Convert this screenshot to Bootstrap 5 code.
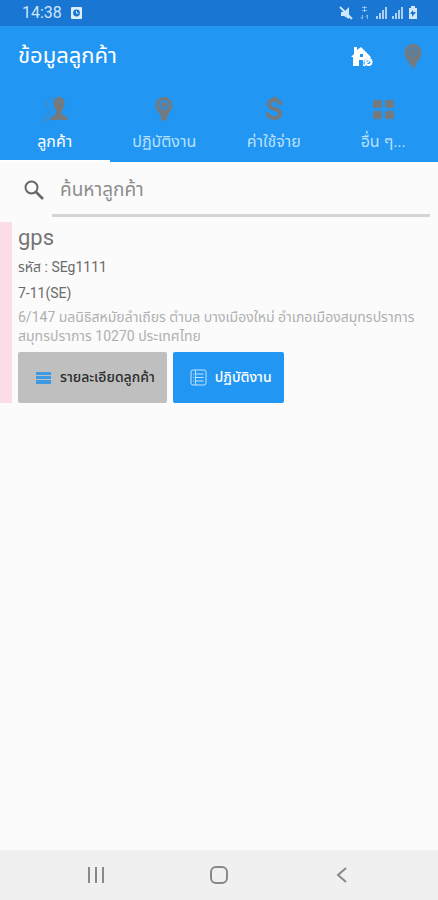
<!DOCTYPE html>
<html lang="th">
<head>
<meta charset="utf-8">
<meta name="viewport" content="width=device-width, initial-scale=1">
<title>ข้อมูลลูกค้า</title>
<link rel="stylesheet" href="https://cdn.jsdelivr.net/npm/bootstrap@5.3.0/dist/css/bootstrap.min.css">
<style>
body { font-family: Roboto, "Noto Sans Thai", "Noto Sans", sans-serif; background: #fbfbfb; color: #6b6b6b; }
.status { background: #1976d2; color: #cfe6fb; height: 26px; font-size: 16px; line-height: 28px; padding: 0 20px 0 22px; }
.appbar { background: #2196f3; color: #fff; }
.title-row { height: 60px; padding: 0 14px 0 18px; }
.page-title { font-size: 22px; line-height: 32px; }
.home-btn { margin-right: 28px; }
.tab-link { height: 76px; padding: 10px 0 0; color: #b9e0fc; font-size: 16px; line-height: 24px; border-bottom: 2px solid transparent; border-radius: 0; }
.tab-link:hover { color: #fff; }
.tab-link.active { color: #fff; border-bottom-color: #fff; }
.tab-link svg { color: #737a80; margin-bottom: 8px; }
.search { padding: 0 8px 0 24px; height: 55px; }
.search-input { font-size: 19px; line-height: 28px; border: 0; border-bottom: 3px solid #d5d5d5; border-radius: 0; background: transparent; padding: 4px 8px 2px; height: 55px; }
.search-input:focus { background: transparent; border-color: #2196f3; }
.search-input::placeholder { color: #8e8e8e; }
.customer { border-left: 12px solid #fadde6; padding: 0 18px 0 6px; margin-top: 5px; }
.cust-name { font-size: 22px; line-height: 32px; color: #757575; }
.cust-line { font-size: 14px; line-height: 26px; }
.cust-address { font-size: 14px; line-height: 19px; color: #b0b0b0; margin: 2px 0 6px; }
.act-row { gap: 6px; }
.act { height: 51px; border-radius: 2px; font-size: 14px; font-weight: 500; padding: 0 12px 0 17px; border: 0; }
.act-grey, .act-grey:hover { background: #bfbfbf; color: #2c2c2c; }
.act-blue, .act-blue:hover { background: #2196f3; color: #fff; }
.sysnav { background: #f0f0f0; height: 50px; padding: 0 35px; }
.sysnav .btn { width: 122px; color: #888; border: 0; }
</style>
<script src="https://cdn.jsdelivr.net/npm/bootstrap@5.3.0/dist/js/bootstrap.bundle.min.js"></script>
</head>
<body class="d-flex flex-column min-vh-100">
<div class="status d-flex align-items-center">
  <span>14:38</span>
  <svg class="ms-2" width="12" height="14" viewBox="0 0 12 14"><rect x="1" y="1" width="11" height="12" rx="1" fill="#dceefb"/><circle cx="6.5" cy="7" r="3.4" fill="#1976d2"/><path d="M6.5 5v2.2h1.800" fill="none" stroke="#dceefb"/></svg>
  <div class="ms-auto d-flex align-items-center">
    <svg width="80" height="16" viewBox="0 0 80 16" fill="#cfe6fb">
      <path d="M3 7h3l5-5v12L6 11H3z"/><path d="M2 2l12 12" stroke="#cfe6fb" stroke-width="2"/>
      <g opacity=".6" fill="none" stroke="#cfe6fb"><path d="M24 2.500h5M24 5.500h5M26.500 1v6M24.500 10v4M22.500 12l2 2M29.500 14v-4M27.500 12l2-2"/></g>
      <path d="M38 11h2v3h-2zM41 8h2v6h-2zM44 5h2v9h-2zM47 2h2v12h-2z" opacity=".8"/>
      <path d="M54 11h2v3h-2zM57 8h2v6h-2zM60 5h2v9h-2zM63 2h2v12h-2z" opacity=".8"/>
      <path d="M71 3h2V1h4v2h2v11h-8z"/><path d="M75 5l-3 4h2v3l4-5h-3z" fill="#1976d2"/>
    </svg>
  </div>
</div>
<header class="appbar">
  <div class="title-row d-flex align-items-center">
    <h1 class="page-title fw-normal m-0 me-auto">ข้อมูลลูกค้า</h1>
    <button class="btn p-0 border-0 home-btn" type="button" aria-label="หน้าหลัก">
      <svg width="23" height="22" viewBox="0 0 23 22" fill="#fff"><path d="M3 1h3v3l4-3 9 9 1 2h-3a5 5 0 0 0-4 7v1h-1v-6H8v6H2v-9H0l3-3z"/><path d="M9 8h3v3H9z" fill="#2196f3"/><circle cx="17.500" cy="16" r="3" fill="none" stroke="#fff" stroke-width="2"/><path d="M16 17l3-3M13 20l2-2" stroke="#fff" stroke-width="1.500"/></svg>
    </button>
    <button class="btn p-0 border-0" type="button" aria-label="ตำแหน่ง">
      <svg width="22" height="26" viewBox="0 0 22 26"><path d="M11 1a8.500 8.500 0 0 0-8.500 8.500C2.500 15 7 18 8.500 23h5C15 18 19.500 15 19.500 9.500A8.500 8.500 0 0 0 11 1zM8.500 24h5l-2.500 2z" fill="#737a80"/><circle cx="11" cy="9" r="4" fill="none" stroke="#4883b5" stroke-width="1.500"/><path d="M8 9h6M11 6v6" stroke="#527fa8"/></svg>
    </button>
  </div>
  <nav class="nav nav-fill row row-cols-4 g-0">
    <a class="nav-link tab-link active d-flex flex-column align-items-center" aria-current="page" href="#customers">
      <svg width="28" height="26" viewBox="0 0 28 26"><path d="M12 2C8 1 6 4 6 9c0 3 2 5 3 6v3l-7 4v2h7" fill="none" stroke="currentColor" opacity=".6"/><path d="M18 1c4 0 6 3 5.500 8-.3 3-1.500 4-2.500 5v4l5 3c1 1 1 2 1 3H9c0-1 0-2 1-3l5-3v-4c-1-1-2.200-2-2.500-5C12 4 14 1 18 1z" fill="currentColor"/></svg>
      ลูกค้า</a>
    <a class="nav-link tab-link d-flex flex-column align-items-center" href="#work">
      <svg width="22" height="26" viewBox="0 0 22 26"><path d="M11 1a8.500 8.500 0 0 0-8.500 8.500C2.500 15 7 17 8.500 21h5C15 17 19.500 15 19.500 9.500A8.500 8.500 0 0 0 11 1zM8 21h6v3h-2v1h-2v-1H8z" fill="currentColor"/><circle cx="11" cy="9" r="4" fill="none" stroke="#2d90e2" stroke-width="2"/></svg>
      ปฏิบัติงาน</a>
    <a class="nav-link tab-link d-flex flex-column align-items-center" href="#expenses">
      <svg width="22" height="26" viewBox="0 0 22 26"><path d="M17.500 9c0-7-12-6-12-1 0 6 12 4 12 9.500 0 6-13 6-13-1M11 1v3M11 21v3" fill="none" stroke="currentColor" stroke-width="4"/></svg>
      ค่าใช้จ่าย</a>
    <a class="nav-link tab-link d-flex flex-column align-items-center" href="#more">
      <svg width="22" height="26" viewBox="0 0 22 26" fill="currentColor"><rect x="1" y="4" width="9" height="8" rx="1.500"/><rect x="13" y="4" width="9" height="8" rx="1.500"/><rect x="1" y="15" width="9" height="8" rx="1.500"/><rect x="13" y="15" width="9" height="8" rx="1.500"/></svg>
      อื่น ๆ...</a>
  </nav>
</header>
<main class="flex-grow-1">
  <form class="search d-flex align-items-center" role="search">
    <label for="q" class="me-2" aria-label="ค้นหา"><svg width="20" height="20" viewBox="0 0 20 20" fill="none" stroke="#666" stroke-width="2"><circle cx="7.500" cy="7.500" r="6"/><path d="M12 12l7 7" stroke-width="2.500"/></svg></label>
    <input id="q" class="form-control search-input shadow-none" type="text" placeholder="ค้นหาลูกค้า">
  </form>
  <article class="customer">
    <h2 class="cust-name fw-normal m-0">gps</h2>
    <p class="cust-line m-0">รหัส : SEg1111</p>
    <p class="cust-line m-0">7-11(SE)</p>
    <p class="cust-address">6/147 มลนิธิสหมัยลำเถียร ตำบล บางเมืองใหม่ อำเภอเมืองสมุทรปราการ สมุทรปราการ 10270 ประเทศไทย</p>
    <div class="d-flex act-row">
      <button class="btn act act-grey d-flex align-items-center" type="button"><svg class="me-2" width="17" height="14" viewBox="0 0 17 14" fill="#3d9be6"><rect x="1" y="1" width="15" height="3"/><rect x="1" y="5" width="15" height="3"/><rect x="1" y="9" width="15" height="4"/></svg>รายละเอียดลูกค้า</button>
      <button class="btn act act-blue d-flex align-items-center" type="button"><svg class="me-2" width="17" height="17" viewBox="0 0 17 17" fill="none" stroke="#c5e4fc"><rect x="1" y="1" width="15" height="15" rx="2"/><path d="M5.500 1v15M5.500 5h8M5.500 8.500h8M5.500 12h8M3 5h1M3 8.500h1M3 12h1"/></svg>ปฏิบัติงาน</button>
    </div>
  </article>
</main>
<footer class="sysnav d-flex justify-content-between align-items-center">
  <button class="btn p-0" type="button" aria-label="แอปล่าสุด"><svg width="18" height="22" viewBox="0 0 18 22" stroke="currentColor" stroke-width="2"><path d="M2 2v16M9 2v16M16 2v16"/></svg></button>
  <button class="btn p-0" type="button" aria-label="โฮม"><svg width="18" height="22" viewBox="0 0 18 22" fill="none" stroke="currentColor" stroke-width="2"><rect x="1" y="2" width="16" height="16" rx="5"/></svg></button>
  <button class="btn p-0" type="button" aria-label="กลับ"><svg width="12" height="22" viewBox="0 0 12 22" fill="none" stroke="currentColor" stroke-width="2"><path d="M10 3L2 10l8 7"/></svg></button>
</footer>
</body>
</html>
